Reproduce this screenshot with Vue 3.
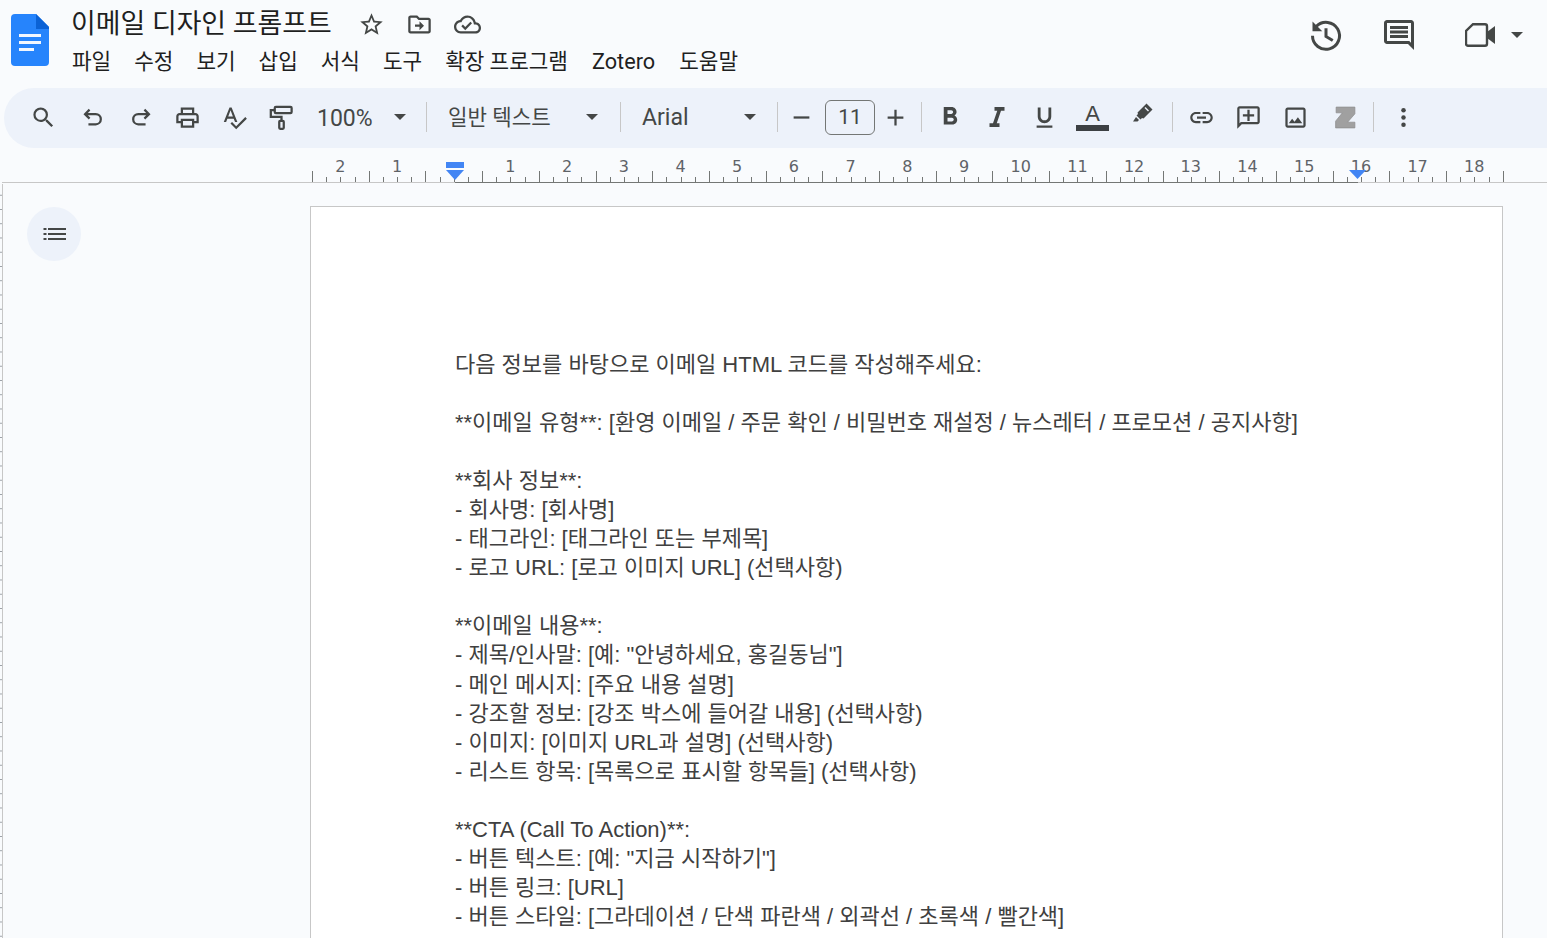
<script setup>
const docLines = [
  '다음 정보를 바탕으로 이메일 HTML 코드를 작성해주세요:',
  '',
  '**이메일 유형**: [환영 이메일 / 주문 확인 / 비밀번호 재설정 / 뉴스레터 / 프로모션 / 공지사항]',
  '',
  '**회사 정보**:',
  '- 회사명: [회사명]',
  '- 태그라인: [태그라인 또는 부제목]',
  '- 로고 URL: [로고 이미지 URL] (선택사항)',
  '',
  '**이메일 내용**:',
  '- 제목/인사말: [예: "안녕하세요, 홍길동님"]',
  '- 메인 메시지: [주요 내용 설명]',
  '- 강조할 정보: [강조 박스에 들어갈 내용] (선택사항)',
  '- 이미지: [이미지 URL과 설명] (선택사항)',
  '- 리스트 항목: [목록으로 표시할 항목들] (선택사항)',
  '',
  '**CTA (Call To Action)**:',
  '- 버튼 텍스트: [예: "지금 시작하기"]',
  '- 버튼 링크: [URL]',
  '- 버튼 스타일: [그라데이션 / 단색 파란색 / 외곽선 / 초록색 / 빨간색]',
]

const menus = ['파일', '수정', '보기', '삽입', '서식', '도구', '확장 프로그램', 'Zotero', '도움말']

// ruler: one cm is 56.7px, number 0 sits at the left margin
const unit = 56.7
const zero = 453.7
const ticks = []
for (let i = 0; i <= 84; i++) {
  const x = 312 + i * (unit / 4)
  ticks.push({ x: Math.round(x) + 0.5, long: i % 4 === 0 })
}
const numbers = []
for (let n = -2; n <= 18; n++) {
  if (n === 0) continue
  numbers.push({ x: zero + n * unit, label: Math.abs(n) })
}
</script>

<template>
  <div class="app">
    <header class="topbar">
      <svg class="logo" width="38" height="52" viewBox="0 0 38 52">
        <path d="M4 0H25L38 13V48a4 4 0 0 1-4 4H4a4 4 0 0 1-4-4V4a4 4 0 0 1 4-4z" fill="#2684fc" />
        <path d="M25 0L38 13V15H25z" fill="#0b62d6" />
        <path d="M8 20H30V23H8zM8 27H30V30H8zM8 34H23V37H8z" fill="#f1f6fe" />
      </svg>
      <div class="title-col">
        <div class="title-row">
          <span class="doc-title">이메일 디자인 프롬프트</span>
          <svg class="title-icon star" viewBox="0 0 24 24"><path d="M22 9.24l-7.19-.62L12 2 9.19 8.63 2 9.24l5.46 4.73L5.82 21 12 17.27 18.18 21l-1.63-7.03L22 9.24zM12 15.4l-3.76 2.27 1-4.28-3.32-2.88 4.38-.38L12 6.1l1.71 4.04 4.38.38-3.32 2.88 1 4.28L12 15.4z" /></svg>
          <svg class="title-icon" viewBox="0 0 24 24"><path d="M20 6h-8l-2-2H4c-1.11 0-1.99.89-1.99 2L2 18c0 1.11.89 2 2 2h16c1.11 0 2-.89 2-2V8c0-1.11-.89-2-2-2zm0 12H4V6h5.17l2 2H20v10zm-8-4H8v-2h4V9l4 4-4 4v-3z" /></svg>
          <svg class="title-icon" viewBox="0 0 24 24"><path d="M19.35 10.04C18.67 6.59 15.64 4 12 4 9.11 4 6.6 5.64 5.35 8.04 2.34 8.36 0 10.91 0 14c0 3.31 2.69 6 6 6h13c2.76 0 5-2.24 5-5 0-2.64-2.05-4.78-4.65-4.96zM19 18H6c-2.21 0-4-1.79-4-4 0-2.05 1.53-3.76 3.56-3.97l1.07-.11.5-.95C8.08 7.14 9.94 6 12 6c2.62 0 4.88 1.86 5.39 4.43l.3 1.5 1.53.11c1.56.1 2.78 1.41 2.78 2.96 0 1.65-1.35 3-3 3zm-9-3.82l-2.09-2.09L6.5 13.5 10 17l6.01-6.01-1.41-1.41z" /></svg>
        </div>
        <nav class="menu">
          <span v-for="m in menus" :key="m" :class="{ 'menu-latin': m === 'Zotero' }">{{ m }}</span>
        </nav>
      </div>
      <div class="top-actions">
        <svg class="action history" viewBox="0 0 24 24">
          <path d="M5.6 6.2A9 9 0 1 1 3 12.5" fill="none" stroke="#444746" stroke-width="2" />
          <path d="M3 3v6.5h6.5L3 3z" fill="#444746" />
          <path d="M12 7.5V13l4.5 2.7" fill="none" stroke="#444746" stroke-width="2" />
        </svg>
        <svg class="action comment" viewBox="0 0 24 24"><path d="M21.99 4c0-1.1-.89-2-1.99-2H4c-1.1 0-2 .9-2 2v12c0 1.1.9 2 2 2h14l4 4-.01-18zM20 4v13.17L18.83 16H4V4h16zM6 12h12v2H6zm0-3h12v2H6zm0-3h12v2H6z" /></svg>
        <svg class="action video" viewBox="0 0 30 24">
          <path d="M8 1.2H20a2 2 0 0 1 2 2V20.800a2 2 0 0 1-2 2H3a2 2 0 0 1-2-2V8z" fill="none" stroke="#444746" stroke-width="2.4" />
          <path d="M22 9l8-6v18l-8-6z" fill="#444746" />
        </svg>
        <i class="caret video-caret"></i>
      </div>
    </header>

    <div class="toolbar">
      <button class="tool t-search"><svg viewBox="0 0 24 24"><path d="M15.5 14h-.79l-.28-.27A6.471 6.471 0 0 0 16 9.5 6.5 6.5 0 1 0 9.500 16c1.610 0 3.090-.59 4.230-1.570l.27.28v.79l5 4.990L20.490 19l-4.990-5zm-6 0C7.010 14 5 11.990 5 9.500S7.010 5 9.500 5 14 7.010 14 9.500 11.990 14 9.500 14z" /></svg></button>
      <button class="tool t-undo"><svg viewBox="0 0 24 24" class="line"><path d="M4.500 9H14a4.500 4.500 0 0 1 0 9H7.500M8.500 5L4.500 9l4 4" /></svg></button>
      <button class="tool"><svg viewBox="0 0 24 24" class="line"><path d="M19.500 9H10a4.500 4.500 0 0 0 0 9h6.500M15.500 5l4 4-4 4" /></svg></button>
      <button class="tool"><svg viewBox="0 0 24 24"><path d="M19 8h-1V3H6v5H5c-1.660 0-3 1.340-3 3v6h4v4h12v-4h4v-6c0-1.660-1.340-3-3-3zM8 5h8v3H8V5zm8 12v2H8v-4h8v2zm2-2v-2H6v2H4v-4c0-.55.45-1 1-1h14c.55 0 1 .45 1 1v4h-2z" /></svg></button>
      <button class="tool"><svg viewBox="0 0 24 24"><path d="M12.450 16h2.090L9.430 3H7.570L2.460 16h2.090l1.120-3h5.640l1.140 3zm-6.020-5L8.500 5.480 10.570 11H6.430zm15.160.59l-8.090 8.090L9.830 16l-1.410 1.410 5.090 5.090L23 13l-1.410-1.410z" /></svg></button>
      <button class="tool"><svg viewBox="0 0 24 24" class="line"><rect x="6" y="2.500" width="15" height="5.500" rx="1" /><path d="M6 5.500H2.500V11.500H12V15" /><rect x="10" y="15" width="4" height="7" rx=".8" /></svg></button>

      <span class="label zoom-label">100%</span>
      <i class="caret zoom-caret"></i>
      <i class="sep sep-a"></i>
      <span class="label style-label">일반 텍스트</span>
      <i class="caret style-caret"></i>
      <i class="sep sep-b"></i>
      <span class="label font-label">Arial</span>
      <i class="caret font-caret"></i>
      <i class="sep sep-c"></i>

      <button class="tool t-minus"><svg viewBox="0 0 24 24"><path d="M5 11h14v2H5z" /></svg></button>
      <div class="size-box">11</div>
      <button class="tool t-plus"><svg viewBox="0 0 24 24"><path d="M19 13h-6v6h-2v-6H5v-2h6V5h2v6h6z" /></svg></button>
      <i class="sep sep-d"></i>

      <button class="tool t-b"><svg viewBox="0 0 24 24"><path d="M15.600 10.790c.97-.67 1.650-1.770 1.650-2.790 0-2.260-1.750-4-4-4H7v14h7.040c2.090 0 3.710-1.700 3.710-3.790 0-1.520-.86-2.820-2.150-3.420zM10 6.500h3c.83 0 1.500.67 1.500 1.500s-.67 1.500-1.500 1.500h-3v-3zm3.500 9H10v-3h3.500c.83 0 1.500.67 1.500 1.500s-.67 1.500-1.500 1.500z" /></svg></button>
      <button class="tool t-i"><svg viewBox="0 0 24 24"><path d="M10 4v3h2.210l-3.420 10H6v3h8v-3h-2.210l3.420-10H18V4z" /></svg></button>
      <button class="tool t-u"><svg viewBox="0 0 24 24"><path d="M12 17c3.310 0 6-2.690 6-6V3h-2.500v8c0 1.930-1.570 3.500-3.500 3.500S8.500 12.930 8.500 11V3H6v8c0 3.310 2.690 6 6 6zm-7 2v2h14v-2H5z" /></svg></button>
      <button class="tool t-color">
        <span class="color-a">A</span>
        <i class="color-bar"></i>
      </button>
      <button class="tool t-pen"><svg viewBox="0 0 24 24"><path d="M15.500 2.500L21.500 8.500L12.500 17.500L11 17L9.500 18.500L5.500 14.500L7 13L6.500 11.500zM5 16l3 3-1.500 1.500H2z" /><path d="M14.500 6L18 9.500L17 10.500L13.500 7z" fill="#edf2fa" /></svg></button>
      <i class="sep sep-e"></i>

      <button class="tool t-link"><svg viewBox="0 0 24 24"><path d="M3.900 12c0-1.710 1.390-3.100 3.100-3.100h4V7H7c-2.760 0-5 2.240-5 5s2.240 5 5 5h4v-1.900H7c-1.710 0-3.100-1.390-3.100-3.100zM8 13h8v-2H8v2zm9-6h-4v1.900h4c1.710 0 3.100 1.390 3.100 3.100s-1.390 3.100-3.100 3.100h-4V17h4c2.760 0 5-2.240 5-5s-2.240-5-5-5z" /></svg></button>
      <button class="tool"><svg viewBox="0 0 24 24"><path transform="matrix(-1 0 0 1 24 0)" d="M22 4c0-1.100-.9-2-2-2H4c-1.100 0-2 .9-2 2v12c0 1.100.9 2 2 2h14l4 4V4zm-2 0v13.170L18.830 16H4V4h16zM13 5h-2v4H7v2h4v4h2v-4h4V9h-4z" /></svg></button>
      <button class="tool"><svg viewBox="0 0 24 24"><path d="M19 5v14H5V5h14m0-2H5c-1.100 0-2 .9-2 2v14c0 1.100.9 2 2 2h14c1.100 0 2-.9 2-2V5c0-1.100-.9-2-2-2zm-4.860 8.860l-3 3.870L9 13.140 6 17h12l-3.860-5.140z" /></svg></button>
      <button class="tool t-zotero"><svg viewBox="0 0 24 24"><path d="M3 2H21V8.500L14 16.500H21V22H2.500V15.500L9 7.500H3z" fill="#a0a0a0" stroke="#8c8c8c" stroke-width=".7" /></svg></button>
      <i class="sep sep-f"></i>
      <button class="tool t-dots"><svg viewBox="0 0 24 24"><circle cx="12" cy="5.500" r="2" /><circle cx="12" cy="12" r="2" /><circle cx="12" cy="18.500" r="2" /></svg></button>
    </div>

    <svg class="ruler" width="1547" height="36" viewBox="0 0 1547 36">
      <path d="M2 34.500H455" stroke="#c7c7c7" />
      <path d="M1358 34.500H1547" stroke="#c7c7c7" />
      <path d="M455 34.500H1358" stroke="#747775" />
      <path
        v-for="t in ticks"
        :key="t.x"
        :d="`M${t.x} ${t.long ? 23 : 29}V34`"
        stroke="#747775"
      />
      <text
        v-for="n in numbers"
        :key="n.label + '-' + n.x"
        :x="n.x"
        y="24"
        text-anchor="middle"
        class="ruler-num"
      >{{ n.label }}</text>
      <path d="M446 14H464V20H446z" fill="#4285f4" />
      <path d="M446 22H464L455 32z" fill="#4285f4" />
      <path d="M1349 22H1366L1357.500 31z" fill="#4285f4" />
    </svg>

    <main class="workspace">
      <div class="v-ruler"></div>
      <aside class="side">
        <button class="outline-btn">
          <svg width="26" height="26" viewBox="0 0 26 26"><path d="M2.500 7h3v2h-3zM2.500 12h3v2h-3zM2.500 17h3v2h-3zM7 7h18v2H7zM7 12h18v2H7zM7 17h18v2H7z" fill="#444746" /></svg>
        </button>
      </aside>
      <article class="page">
        <div v-for="(line, i) in docLines" :key="i" class="doc-line">{{ line }}</div>
      </article>
    </main>
  </div>
</template>

<style>
html, body {
  margin: 0;
  height: 100%;
  overflow: hidden;
  background: #f9fbfd;
}
</style>

<style scoped>
.app {
  width: 1547px;
  height: 938px;
  display: flex;
  flex-direction: column;
  overflow: hidden;
  background: #f9fbfd;
  font-family: Roboto, "Noto Sans CJK KR", sans-serif;
  color: #1f1f1f;
}

.topbar {
  height: 88px;
  display: flex;
  align-items: flex-start;
  flex: none;
}

.logo {
  margin: 14px 0 0 11px;
  flex: none;
}

.title-col {
  margin-left: 22px;
  padding-top: 5px;
}

.title-row {
  display: flex;
  align-items: center;
  height: 38px;
}

.doc-title {
  font-size: 26.900px;
  line-height: 38px;
  width: 287px;
  white-space: nowrap;
}

.title-icon {
  width: 27px;
  height: 27px;
  fill: #444746;
  margin-right: 21px;
  flex: none;
}

.menu {
  display: flex;
  gap: 23px;
  font-size: 21.300px;
  line-height: 30px;
  margin: 4px 0 0 1px;
}

.menu-latin {
  font-size: 21.700px;
  margin: 0 1px;
}

.top-actions {
  margin-left: auto;
  padding-top: 17px;
  display: flex;
  align-items: center;
  height: 36px;
}

.action {
  fill: #444746;
  flex: none;
}

.history {
  width: 36px;
  height: 36px;
}

.comment {
  width: 36px;
  height: 36px;
  margin-left: 37px;
}

.video {
  width: 30px;
  height: 24px;
  margin-left: 48px;
}

.caret {
  display: block;
  width: 0;
  height: 0;
  border-left: 6px solid transparent;
  border-right: 6px solid transparent;
  border-top: 6px solid #444746;
  flex: none;
}

.video-caret {
  margin: 0 24px 0 16px;
}

.toolbar {
  height: 60px;
  margin-left: 4px;
  padding: 0 0 2px 16px;
  box-sizing: border-box;
  display: flex;
  align-items: center;
  flex: none;
  background: #edf2fa;
  border-radius: 30px 0 0 30px;
}

.tool {
  width: 47px;
  height: 40px;
  padding: 0;
  border: 0;
  background: none;
  display: flex;
  align-items: center;
  justify-content: center;
  flex: none;
}

.tool svg {
  width: 27px;
  height: 27px;
  fill: #444746;
}

.tool svg.line {
  fill: none;
  stroke: #444746;
  stroke-width: 2;
}

.t-undo { margin-left: 3px; }

.label {
  font-size: 23px;
  color: #444746;
  white-space: nowrap;
  flex: none;
}

.sep {
  display: block;
  width: 1px;
  height: 30px;
  background: #c7c7c7;
  flex: none;
}

.zoom-label { margin: 2px 0 0 12px; width: 56px; }
.zoom-caret { margin-left: 21px; }
.sep-a { margin-left: 20px; }
.style-label { margin: -3px 0 0 21px; width: 102px; font-size: 21.200px; }
.style-caret { margin-left: 36px; }
.sep-b { margin-left: 22px; }
.font-label { margin-left: 21px; width: 46px; }
.font-caret { margin-left: 56px; }
.sep-c { margin-left: 21px; }

.size-box {
  width: 50px;
  height: 35px;
  box-sizing: border-box;
  border: 1px solid #747775;
  border-radius: 6px;
  font-size: 21px;
  line-height: 33px;
  text-align: center;
  color: #444746;
  flex: none;
}

.t-plus { margin-left: -3px; }
.sep-d { margin-left: 2px; }

.t-b { margin-left: 4px; }
.t-b svg, .t-i svg { width: 30px; height: 30px; }
.t-u { margin-left: 1px; }

.t-color {
  margin-left: 1px;
  flex-direction: column;
}

.color-a {
  font-size: 22px;
  font-weight: 500;
  line-height: 22px;
  color: #444746;
}

.color-bar {
  display: block;
  width: 33px;
  height: 6px;
  background: #3c4043;
}

.t-pen { margin-left: 3px; }
.t-pen svg { width: 24px; height: 24px; margin-bottom: 8px; }
.sep-e { margin-left: 6px; }
.t-link { margin-left: 5px; }
.t-zotero { margin-left: 3px; }
.t-zotero svg { width: 25px; height: 27px; }
.sep-f { margin-left: 4px; }
.t-dots { margin-left: 6px; }

.ruler {
  display: block;
  flex: none;
}

.ruler-num {
  font-family: "DejaVu Sans", sans-serif;
  font-size: 16px;
  fill: #5f6368;
}

.workspace {
  flex: 1;
  min-height: 0;
  display: flex;
}

.v-ruler {
  width: 3px;
  flex: none;
  box-sizing: border-box;
  border-right: 1px solid #c7c7c7;
  background: linear-gradient(to bottom, #9aa0a6 0, #9aa0a6 1.250px, transparent 1.250px) 0 10.750px / 100% 14.250px repeat-y;
}

.side {
  width: 307px;
  flex: none;
  padding: 23px 0 0 24px;
  box-sizing: border-box;
}

.outline-btn {
  width: 54px;
  height: 54px;
  border: 0;
  padding: 0;
  border-radius: 50%;
  background: #edf2fa;
  display: flex;
  align-items: center;
  justify-content: center;
}

.page {
  width: 1193px;
  height: 900px;
  margin-top: 22px;
  padding: 143px 0 0 144px;
  box-sizing: border-box;
  flex: none;
  background: #fff;
  border: 1px solid #c7c7c7;
  font-family: "Liberation Sans", "Noto Sans CJK KR", sans-serif;
  font-size: 22px;
  line-height: 29.05px;
  color: #404040;
}

.doc-line {
  height: 29.05px;
  white-space: pre;
}
</style>
